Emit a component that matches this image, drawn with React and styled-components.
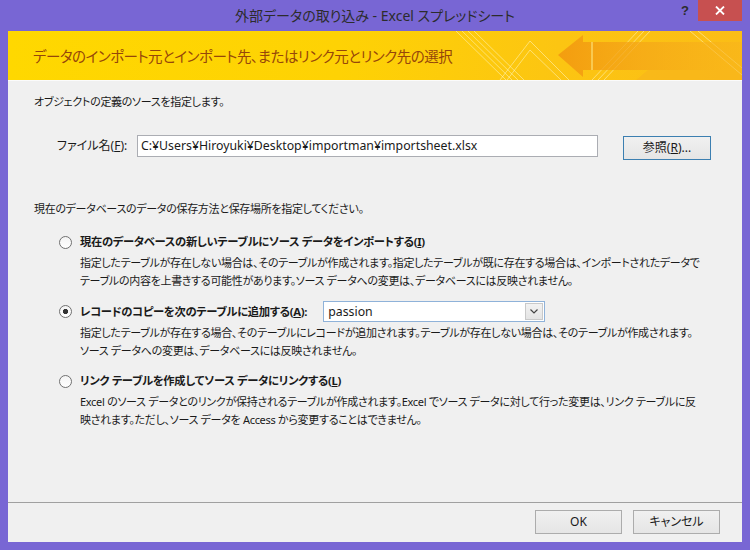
import styled, { createGlobalStyle } from "styled-components";

const GlobalStyle = createGlobalStyle`
  html, body {
    margin: 0;
    padding: 0;
  }
  body {
    width: 750px;
    height: 550px;
    overflow: hidden;
    font-family: "Noto Sans", "Noto Sans CJK JP", sans-serif;
    font-feature-settings: "palt";
    color: #1a1a1a;
  }
`;

const options = [
  {
    id: "import",
    label: "現在のデータベースの新しいテーブルにソース データをインポートする",
    accessKey: "I",
    lines: [
      "指定したテーブルが存在しない場合は、そのテーブルが作成されます。指定したテーブルが既に存在する場合は、インポートされたデータで",
      "テーブルの内容を上書きする可能性があります。ソース データへの変更は、データベースには反映されません。",
    ],
  },
  {
    id: "append",
    label: "レコードのコピーを次のテーブルに追加する",
    accessKey: "A",
    colon: true,
    checked: true,
    lines: [
      "指定したテーブルが存在する場合、そのテーブルにレコードが追加されます。テーブルが存在しない場合は、そのテーブルが作成されます。",
      "ソース データへの変更は、データベースには反映されません。",
    ],
  },
  {
    id: "link",
    label: "リンク テーブルを作成してソース データにリンクする",
    accessKey: "L",
    lines: [
      "Excel のソース データとのリンクが保持されるテーブルが作成されます。Excel でソース データに対して行った変更は、リンク テーブルに反",
      "映されます。ただし、ソース データを Access から変更することはできません。",
    ],
  },
];

const App = () => {
  return (
    <>
      <GlobalStyle />
      <Frame>
        <TitleBar>
          <Title>外部データの取り込み - Excel スプレッドシート</Title>
          <Controls>
            <HelpButton>?</HelpButton>
            <CloseButton>
              <svg width="10" height="9" viewBox="0 0 10 9">
                <path d="M1 0.5 L9 8.5 M9 0.5 L1 8.5" stroke="#fff" strokeWidth="1.8" />
              </svg>
            </CloseButton>
          </Controls>
        </TitleBar>

        <Client>
          <Banner>
            <BannerArt />
            <BannerTitle>
              データのインポート元とインポート先、またはリンク元とリンク先の選択
            </BannerTitle>
          </Banner>

          <Body>
            <Text>オブジェクトの定義のソースを指定します。</Text>

            <FileRow>
              <FileLabel>
                ファイル名(<Key>F</Key>):
              </FileLabel>
              <PathInput>C:¥Users¥Hiroyuki¥Desktop¥importman¥importsheet.xlsx</PathInput>
              <Button $primary $width={88}>
                参照(<Key>R</Key>)...
              </Button>
            </FileRow>

            <Text $top={40}>
              現在のデータベースのデータの保存方法と保存場所を指定してください。
            </Text>

            <OptionList>
              {options.map((opt) => (
                <Option key={opt.id}>
                  <Radio $checked={opt.checked} />
                  <OptionHead>
                    <OptionLabel>
                      {opt.label}(<Key>{opt.accessKey}</Key>){opt.colon && ":"}
                    </OptionLabel>
                    {opt.id === "append" && (
                      <Combo>
                        <ComboValue>passion</ComboValue>
                        <ComboButton>
                          <svg width="8" height="5" viewBox="0 0 8 5">
                            <path d="M0.5 0.5 L4 4 L7.5 0.5" fill="none" stroke="#444" strokeWidth="1.2" />
                          </svg>
                        </ComboButton>
                      </Combo>
                    )}
                  </OptionHead>
                  <Description>
                    {opt.lines.map((line) => (
                      <div key={line}>{line}</div>
                    ))}
                  </Description>
                </Option>
              ))}
            </OptionList>
          </Body>

          <Footer>
            <Button $width={87}>OK</Button>
            <Button $width={87}>キャンセル</Button>
          </Footer>
        </Client>
      </Frame>
    </>
  );
};

// 배너 오른쪽 장식 (선, 화살표)
const BannerArt = () => (
  <ArtSvg viewBox="0 0 734 49" preserveAspectRatio="none">
    <defs>
      <linearGradient id="arrowFill" x1="0" x2="1" y1="0" y2="0">
        <stop offset="0" stopColor="#f2960f" stopOpacity="0.85" />
        <stop offset="0.45" stopColor="#f4a418" stopOpacity="0.7" />
        <stop offset="1" stopColor="#f8b41c" stopOpacity="0.55" />
      </linearGradient>
    </defs>
    <g stroke="#fff6c0" strokeOpacity="0.55" strokeWidth="1" fill="none">
      <path d="M448 0 L498 49 M454 0 L504 49 M460 0 L510 49 M466 0 L516 49" />
      <path d="M492 49 L522 10 L561 49 M499 49 L522 19 L553 49" />
      <path d="M584 49 L630 0 M590 49 L636 0 M596 49 L642 0" />
      <path d="M682 0 L734 44 M690 0 L734 37" />
    </g>
    <polygon points="550,24 575,4 575,11 734,11 734,39 575,39 575,46" fill="url(#arrowFill)" />
    <path d="M584 11 L584 39" stroke="#fde27a" strokeWidth="2" opacity="0.6" />
    <polygon points="640,39 734,39 734,49 628,49" fill="#f6b01e" opacity="0.45" />
  </ArtSvg>
);

export default App;

const Frame = styled.div`
  width: 750px;
  height: 550px;
  box-sizing: border-box;
  padding: 0 8px 8px;
  background: #7866d4;
  display: flex;
  flex-direction: column;
`;

const TitleBar = styled.div`
  height: 31px;
  display: grid;
  grid-template-columns: 1fr auto 1fr;
  align-items: start;
`;

const Title = styled.div`
  grid-column: 2;
  font-size: 14px;
  line-height: 31px;
  color: #2c2c2c;
`;

const Controls = styled.div`
  grid-column: 3;
  justify-self: end;
  display: flex;
  align-items: flex-start;
`;

const HelpButton = styled.div`
  width: 26px;
  height: 21px;
  font-family: "Liberation Sans", sans-serif;
  font-size: 13px;
  font-weight: bold;
  line-height: 22px;
  text-align: center;
  color: #2c2c2c;
`;

const CloseButton = styled.div`
  width: 44px;
  height: 21px;
  background: #c75050;
  display: flex;
  align-items: center;
  justify-content: center;
`;

const Client = styled.div`
  flex: 1;
  display: flex;
  flex-direction: column;
  background: #f0f0f0;
`;

const Banner = styled.div`
  position: relative;
  height: 49px;
  padding-left: 25px;
  display: flex;
  align-items: center;
  overflow: hidden;
  background: linear-gradient(90deg, #ffd800 0%, #fed204 45%, #fcc512 75%, #fbbd16 100%);
  border-bottom: 1px solid #fbfbfb;
`;

const ArtSvg = styled.svg`
  position: absolute;
  inset: 0;
  width: 100%;
  height: 100%;
`;

const BannerTitle = styled.h1`
  position: relative;
  margin: 0;
  font-size: 14.5px;
  letter-spacing: -0.5px;
  font-weight: normal;
  color: #96460a;
`;

const Body = styled.div`
  flex: 1;
  padding: 12px 0 0 26px;
  font-size: 11px;
  letter-spacing: -0.3px;
  line-height: 18px;
`;

const Text = styled.div`
  margin-top: ${(p) => p.$top || 0}px;
`;

const Key = styled.span`
  text-decoration: underline;
`;

const FileRow = styled.div`
  margin-top: 24px;
  padding-left: 23px;
  display: flex;
  align-items: flex-start;
  font-size: 12px;
  letter-spacing: 0;
`;

const FileLabel = styled.span`
  width: 80px;
  line-height: 22px;
`;

const PathInput = styled.div`
  width: 461px;
  height: 22px;
  box-sizing: border-box;
  padding: 0 3px;
  border: 1px solid #abadb3;
  background: #fff;
  font-size: 12.3px;
  line-height: 20px;
  white-space: nowrap;
`;

const Button = styled.div`
  width: ${(p) => p.$width}px;
  height: 24px;
  box-sizing: border-box;
  margin-left: ${(p) => (p.$primary ? "25px" : "0")};
  margin-top: ${(p) => (p.$primary ? "1px" : "0")};
  border: 1px solid ${(p) => (p.$primary ? "#3c7fb1" : "#acacac")};
  background: linear-gradient(#f0f0f0, #e5e5e5);
  font-size: 12px;
  letter-spacing: 0;
  line-height: 22px;
  text-align: center;
  color: #1a1a1a;
`;

const OptionList = styled.div`
  margin-top: 14px;
  padding-left: 25px;
  display: flex;
  flex-direction: column;
  gap: 11px;
`;

const Option = styled.div`
  display: grid;
  grid-template-columns: 13px 1fr;
  column-gap: 8px;
  row-gap: 2px;
  align-items: center;
`;

const Radio = styled.span`
  width: 13px;
  height: 13px;
  box-sizing: border-box;
  border-radius: 50%;
  border: 1px solid #707070;
  background: radial-gradient(circle, #333 0 2.4px, transparent 2.9px),
    linear-gradient(#f4f4f4, #fff);
  background-size: ${(p) => (p.$checked ? "100% 100%, 100% 100%" : "0 0, 100% 100%")};
  background-repeat: no-repeat;
`;

const OptionHead = styled.div`
  min-height: 20px;
  display: flex;
  align-items: center;
`;

const OptionLabel = styled.span`
  font-weight: bold;
  font-size: 11.3px;
`;

const Combo = styled.div`
  margin-left: 16px;
  width: 222px;
  height: 21px;
  box-sizing: border-box;
  border: 1px solid #8fb2d9;
  background: #fff;
  display: flex;
  align-items: stretch;
  font-size: 12.3px;
  letter-spacing: 0;
`;

const ComboValue = styled.span`
  flex: 1;
  padding-left: 4px;
  line-height: 19px;
`;

const ComboButton = styled.span`
  width: 16px;
  margin: 1px;
  border: 1px solid #c9c9c9;
  background: linear-gradient(#f2f2f2, #e4e4e4);
  display: flex;
  align-items: center;
  justify-content: center;
`;

const Description = styled.div`
  grid-column: 2;
  white-space: nowrap;
`;

const Footer = styled.div`
  height: 40px;
  box-sizing: border-box;
  border-top: 1px solid #a0a0a0;
  padding: 7px 22px 0 0;
  display: flex;
  justify-content: flex-end;
  gap: 11px;
`;
